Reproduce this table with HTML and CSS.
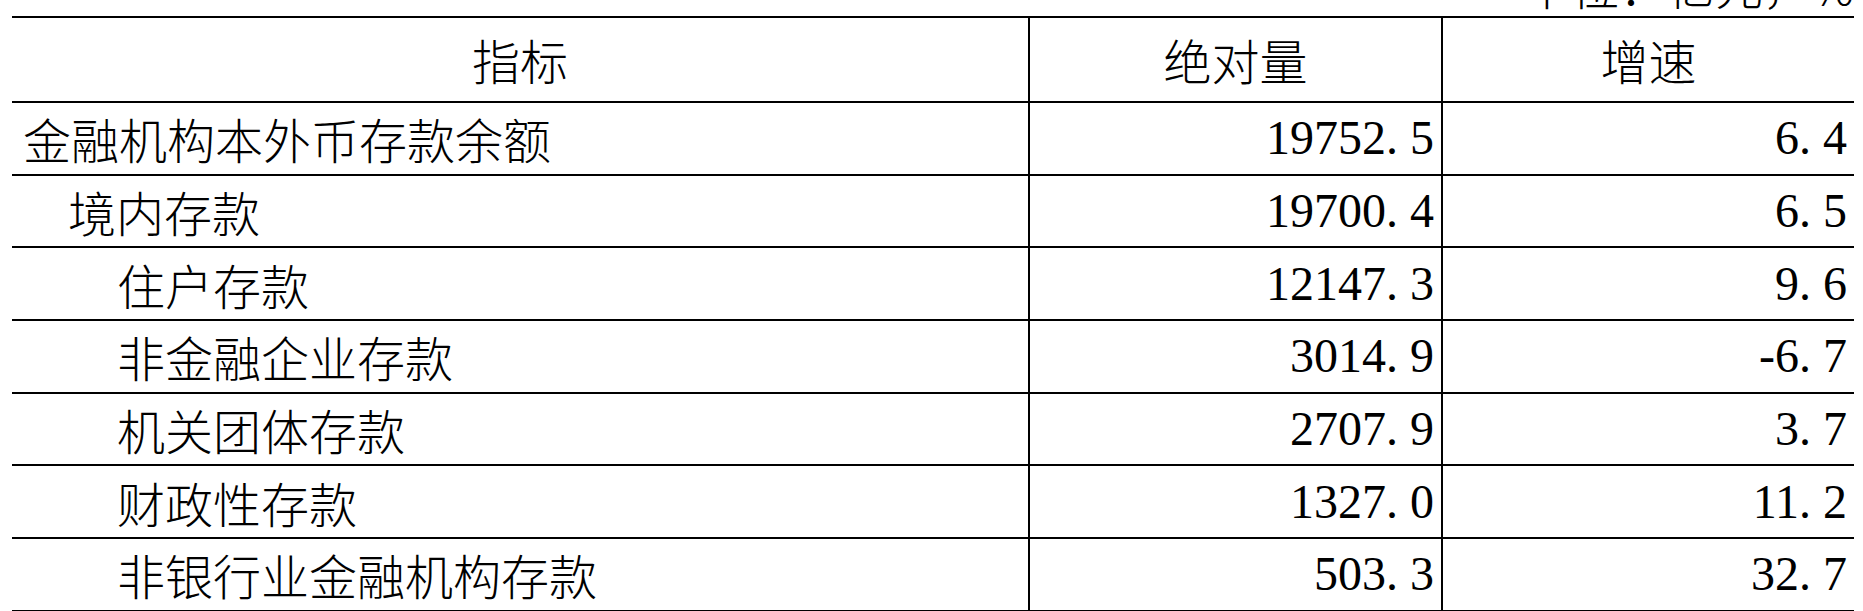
FILE: index.html
```html
<!DOCTYPE html>
<html lang="zh-CN">
<head>
<meta charset="utf-8">
<title>金融机构存款</title>
<link rel="stylesheet" href="styles.css">
</head>
<body>
<div class="page">
  <div class="unit">单位：亿元，%</div>
  <div class="grid">
    <div class="cell head">指标</div>
    <div class="cell head sep">绝对量</div>
    <div class="cell head sep">增速</div>

    <div class="cell name lv0">金融机构本外币存款余额</div>
    <div class="cell num sep">19752<span class="dot">.</span>5</div>
    <div class="cell num sep">6<span class="dot">.</span>4</div>

    <div class="cell name lv1">境内存款</div>
    <div class="cell num sep">19700<span class="dot">.</span>4</div>
    <div class="cell num sep">6<span class="dot">.</span>5</div>

    <div class="cell name lv2">住户存款</div>
    <div class="cell num sep">12147<span class="dot">.</span>3</div>
    <div class="cell num sep">9<span class="dot">.</span>6</div>

    <div class="cell name lv2">非金融企业存款</div>
    <div class="cell num sep">3014<span class="dot">.</span>9</div>
    <div class="cell num sep">-6<span class="dot">.</span>7</div>

    <div class="cell name lv2">机关团体存款</div>
    <div class="cell num sep">2707<span class="dot">.</span>9</div>
    <div class="cell num sep">3<span class="dot">.</span>7</div>

    <div class="cell name lv2">财政性存款</div>
    <div class="cell num sep">1327<span class="dot">.</span>0</div>
    <div class="cell num sep">11<span class="dot">.</span>2</div>

    <div class="cell name lv2">非银行业金融机构存款</div>
    <div class="cell num sep">503<span class="dot">.</span>3</div>
    <div class="cell num sep">32<span class="dot">.</span>7</div>
  </div>
</div>
</body>
</html>
```
FILE: styles.css
```css
html, body {
  margin: 0;
  padding: 0;
  background: #ffffff;
  overflow: hidden;
}

body {
  color: #000000;
  font-family: "Noto Sans CJK SC", "Noto Sans CJK JP", sans-serif;
  font-weight: 300;
  font-size: 48px;
}

.page {
  width: 1863px;
  height: 611px;
  overflow: hidden;
}

.unit {
  width: 1854px;
  text-align: right;
  line-height: 48px;
  height: 48px;
  margin-top: -40px;
  margin-bottom: 8px;
  white-space: nowrap;
}

.grid {
  margin-left: 12px;
  width: 1842px;
  display: grid;
  grid-template-columns: 1016px 413px 413px;
  grid-template-rows: 85px;
  grid-auto-rows: 72.7px;
  border-top: 2px solid #000;
}

.cell {
  box-sizing: border-box;
  border-bottom: 2px solid #000;
  display: flex;
  align-items: center;
  white-space: nowrap;
  line-height: 1;
}

.sep {
  border-left: 2px solid #000;
}

.head {
  justify-content: center;
  padding-bottom: 2px;
}

.name {
  padding-left: 11px;
}

.lv1 { padding-left: 56px; }
.lv2 { padding-left: 105px; }

.num {
  justify-content: flex-end;
  padding-right: 7px;
  font-family: "Liberation Serif", "Times New Roman", serif;
  font-weight: 400;
  font-size: 48px;
}

.dot {
  margin-right: 12px;
}
```
